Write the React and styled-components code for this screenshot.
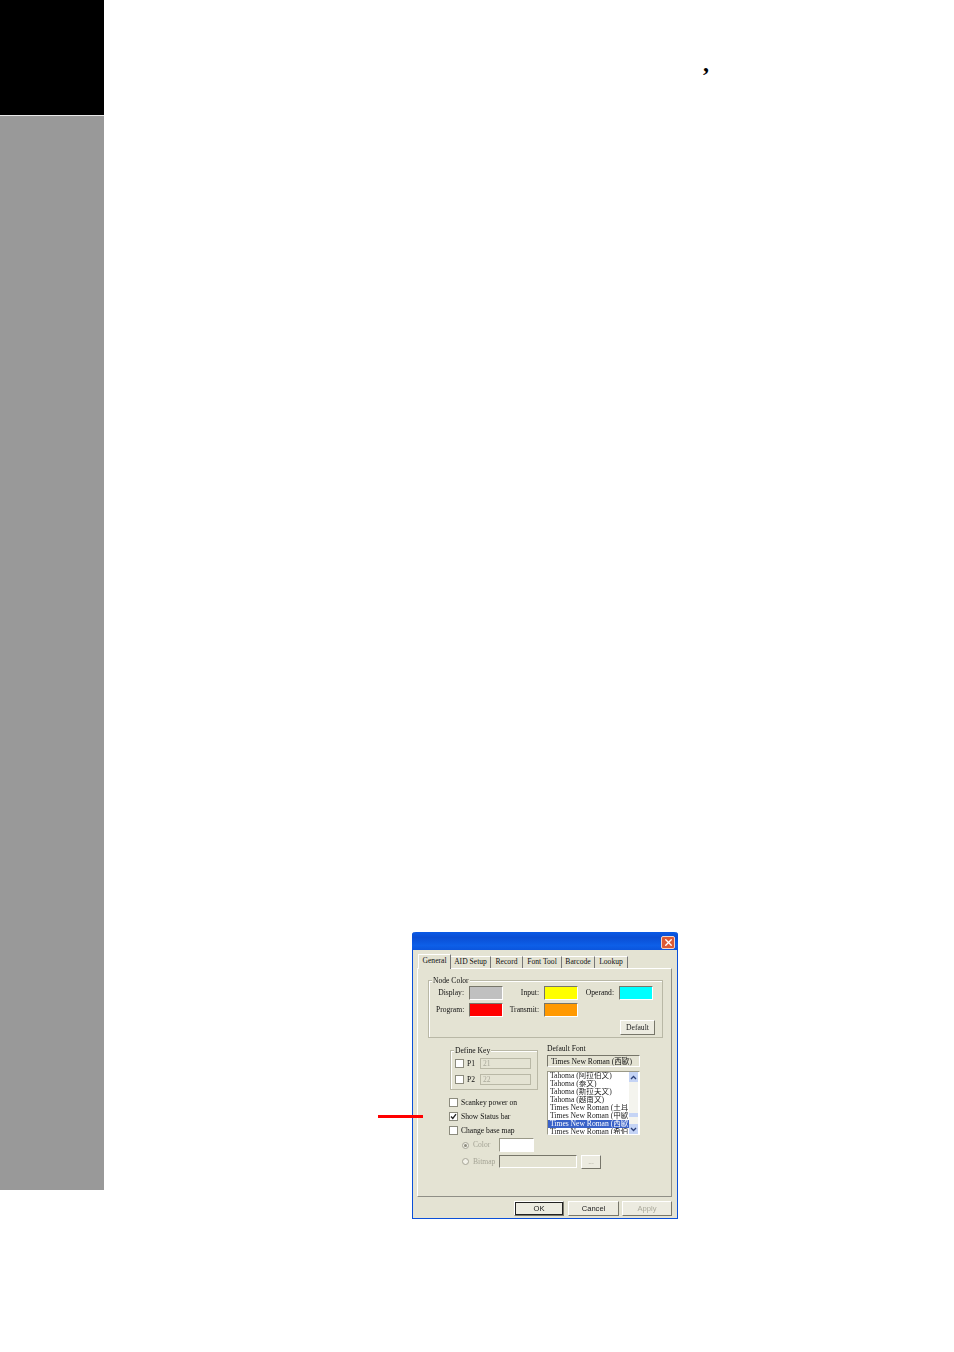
import styled, { createGlobalStyle } from "styled-components";
import { X } from "lucide-react";

const GlobalStyle = createGlobalStyle`
  html, body {
    margin: 0;
    padding: 0;
    background: #fff;
  }
  * {
    box-sizing: border-box;
  }
`;

const Page = styled.div`
  display: flex;
  width: 954px;
  height: 1352px;
  overflow: hidden;
`;

const Sidebar = styled.aside`
  display: flex;
  flex-direction: column;
  flex: none;
  width: 104px;
  height: 1190px;
  background: #999;
`;

const SideHead = styled.div`
  height: 115px;
  background: #000;
`;

const SideRule = styled.div`
  height: 1px;
  background: #e8e8e8;
`;

const Main = styled.main`
  flex: 1;
  display: flex;
  flex-direction: column;
`;

const HeadLine = styled.p`
  margin: 0;
  height: 932px;
  padding: 48px 0 0 599px;
  font: bold 24px/30px "Liberation Serif", serif;
  color: #000;
`;

const Figure = styled.figure`
  position: relative;
  margin: 0 0 0 308px;
  width: 266px;
`;

const Pointer = styled.div`
  position: absolute;
  left: -34px;
  top: 183px;
  width: 45px;
  height: 3px;
  background: #f00;
  z-index: 2;
`;

const Dialog = styled.div`
  display: flex;
  flex-direction: column;
  height: 287px;
  background: #e4e3d3;
  border: 1px solid #0a4fd8;
  border-top: 0;
  border-radius: 3px 3px 0 0;
  font: 7.6px/10px "Liberation Serif", "Noto Sans CJK TC", serif;
  color: #111;
`;

const TitleBar = styled.div`
  display: flex;
  justify-content: flex-end;
  align-items: center;
  flex: none;
  height: 18px;
  margin: 0 -1px;
  padding: 2px 3px 0 0;
  border-radius: 4px 4px 0 0;
  background: linear-gradient(#0a5ae6 0, #0a4ed4 30%, #0d5fe8 75%, #0b55dd 100%);
`;

const CloseBox = styled.div`
  display: flex;
  align-items: center;
  justify-content: center;
  width: 14px;
  height: 13px;
  border: 1px solid #f3d5c8;
  border-radius: 2px;
  background: #dc5a35;
  color: #fff;
`;

const Body = styled.div`
  flex: 1;
  display: flex;
  flex-direction: column;
  padding: 4px 5px 3px 4px;
  min-height: 0;
  filter: blur(0.3px);
`;

const Tabs = styled.div`
  display: flex;
  flex: none;
  height: 14px;
  padding-left: 1px;
  align-items: flex-end;
  position: relative;
  z-index: 1;
`;

const Tab = styled.div`
  flex: none;
  width: ${(p) => p.$w}px;
  height: ${(p) => (p.$active ? 15 : 12)}px;
  padding-top: ${(p) => (p.$active ? 1 : 0)}px;
  margin-bottom: ${(p) => (p.$active ? -1 : 0)}px;
  text-align: center;
  white-space: nowrap;
  background: #e4e3d3;
  border-top: 1px solid #fff;
  border-left: ${(p) => (p.$active ? "1px solid #fff" : "0")};
  border-right: 1px solid #777;
`;

const Panel = styled.div`
  display: flex;
  flex-direction: column;
  flex: none;
  height: 229px;
  padding: 11px 10px 0 10px;
  border: 1px solid #fff;
  border-right-color: #8f8f86;
  border-bottom-color: #8f8f86;
`;

const Group = styled.div`
  position: relative;
  flex: none;
  height: ${(p) => p.$h}px;
  width: ${(p) => p.$w}px;
  border: 1px solid #b9b8a6;
  box-shadow: inset 1px 1px 0 #fff;
`;

const GroupTitle = styled.span`
  position: absolute;
  left: 3px;
  top: -5px;
  padding: 0 1px;
  background: #e4e3d3;
  white-space: nowrap;
`;

const ColorGrid = styled.div`
  display: grid;
  grid-template-columns: 33px 34px 41px 34px 41px 34px;
  grid-auto-rows: 14px;
  row-gap: 3px;
  margin: 5px 0 0 7px;
  align-items: center;
`;

const FieldLabel = styled.span`
  text-align: right;
  padding-right: 5px;
  white-space: nowrap;
`;

const Swatch = styled.div`
  height: 14px;
  background: ${(p) => p.$color};
  border: 1px solid;
  border-color: #77766a #fff #fff #77766a;
`;

const GroupFooter = styled.div`
  display: flex;
  justify-content: flex-end;
  margin: 3px 7px 0 0;
`;

const Button = styled.div`
  display: flex;
  align-items: center;
  justify-content: center;
  flex: none;
  width: ${(p) => p.$w}px;
  height: ${(p) => p.$h || 15}px;
  margin-left: ${(p) => p.$ml || 0}px;
  color: ${(p) => (p.$disabled ? "#aaa99b" : "#222")};
  font-family: ${(p) => (p.$sans ? '"Liberation Sans", sans-serif' : "inherit")};
  background: #ecebe0;
  border: 1px solid;
  border-color: #fff #77766a #77766a #fff;
  box-shadow: ${(p) => (p.$default ? "0 0 0 1px #222 inset" : "none")};
`;

const Columns = styled.div`
  display: flex;
  flex: none;
  margin: 6px 0 0 22px;
`;

const LeftCol = styled.div`
  display: flex;
  flex-direction: column;
  width: 97px;
  padding-top: 6px;
`;

const RightCol = styled.div`
  display: flex;
  flex-direction: column;
  width: 93px;
`;

const KeyRow = styled.div`
  display: flex;
  align-items: center;
  height: 11px;
  margin: ${(p) => p.$top}px 0 0 4px;
`;

const Box = styled.span`
  display: flex;
  align-items: center;
  justify-content: center;
  flex: none;
  width: 9px;
  height: 9px;
  background: #fff;
  border: 1px solid #8c8b7d;
`;

const KeyName = styled.span`
  flex: none;
  width: 16px;
  padding-left: 3px;
`;

const KeyInput = styled.span`
  flex: none;
  width: 51px;
  height: 11px;
  padding-left: 2px;
  line-height: 10px;
  color: #aaa99b;
  background: #e4e3d3;
  border: 1px solid #b9b8a6;
`;

const CheckList = styled.div`
  display: flex;
  flex-direction: column;
  gap: 5px;
  margin-top: 8px;
`;

const CheckRow = styled.label`
  display: flex;
  align-items: center;
  gap: 3px;
  height: 9px;
  margin-left: -1px;
  white-space: nowrap;
`;

const FontLabel = styled.div`
  height: 11px;
  line-height: 9px;
`;

const FontField = styled.div`
  height: 12px;
  padding-left: 3px;
  line-height: 11px;
  white-space: nowrap;
  overflow: hidden;
  background: #e4e3d3;
  border: 1px solid;
  border-color: #77766a #fff #fff #77766a;
`;

const FontList = styled.div`
  display: flex;
  height: 64px;
  margin-top: 4px;
  padding-right: 1px;
  background: #fff;
  border: 1px solid;
  border-color: #9a9988 #fff #fff #9a9988;
  overflow: hidden;
`;

const Items = styled.div`
  flex: 1;
  min-width: 0;
  overflow: hidden;
`;

const Item = styled.div`
  height: 8px;
  padding-left: 2px;
  line-height: 8px;
  white-space: nowrap;
  overflow: hidden;
  color: ${(p) => (p.$selected ? "#fff" : "#222")};
  background: ${(p) => (p.$selected ? "#3a62c8" : "transparent")};
`;

const ScrollTrack = styled.div`
  display: flex;
  flex-direction: column;
  flex: none;
  width: 9px;
  background: #f4f4ee;
`;

const ScrollArrow = styled.div`
  display: flex;
  align-items: center;
  justify-content: center;
  flex: none;
  height: 10px;
  background: #c5d4f5;
  color: #2a3f78;
`;

const ScrollSpace = styled.div`
  flex: 1;
  display: flex;
  flex-direction: column;
  justify-content: flex-end;
  padding-bottom: 7px;
`;

const ScrollThumb = styled.div`
  height: 4px;
  background: #c5d4f5;
`;

const RadioRow = styled.div`
  display: flex;
  align-items: center;
  height: ${(p) => p.$h}px;
  margin: ${(p) => p.$top}px 0 0 34px;
  color: #a5a496;
`;

const Radio = styled.span`
  display: flex;
  align-items: center;
  justify-content: center;
  flex: none;
  width: 7px;
  height: 7px;
  border: 1px solid #a5a496;
  border-radius: 50%;
  background: #f2f1e8;
`;

const RadioDot = styled.span`
  width: 3px;
  height: 3px;
  border-radius: 50%;
  background: #8c8b7d;
`;

const RadioText = styled.span`
  flex: none;
  width: 30px;
  padding-left: 4px;
`;

const ColorInput = styled.div`
  width: 35px;
  height: 14px;
  background: #fff;
  border: 1px solid;
  border-color: #9a9988 #fff #fff #9a9988;
`;

const BitmapInput = styled.div`
  width: 78px;
  height: 13px;
  background: #e4e3d3;
  border: 1px solid;
  border-color: #77766a #fff #fff #77766a;
`;

const Footer = styled.div`
  display: flex;
  justify-content: flex-end;
  flex: none;
  margin-top: 4px;
`;

const tabs = [
  ["General", 33, true],
  ["AID Setup", 40],
  ["Record", 32],
  ["Font Tool", 39],
  ["Barcode", 33],
  ["Lookup", 33],
];

const fonts = [
  "Tahoma (阿拉伯文)",
  "Tahoma (泰文)",
  "Tahoma (斯拉夫文)",
  "Tahoma (越南文)",
  "Times New Roman (土耳",
  "Times New Roman (中歐",
  "Times New Roman (西歐",
  "Times New Roman (希伯",
];

const Check = () => (
  <svg width="7" height="7" viewBox="0 0 7 7">
    <path d="M1 3.5 L2.8 5.5 L6 1.2" fill="none" stroke="#222" strokeWidth="1.3" />
  </svg>
);

const Chevron = ({ down }) => (
  <svg width="7" height="5" viewBox="0 0 7 5">
    <path d={down ? "M1 1 L3.5 3.5 L6 1" : "M1 4 L3.5 1.5 L6 4"} fill="none" stroke="currentColor" strokeWidth="1.3" />
  </svg>
);

export default function App() {
  return (
    <Page>
      <GlobalStyle />
      <Sidebar>
        <SideHead />
        <SideRule />
      </Sidebar>
      <Main>
        <HeadLine>,</HeadLine>
        <Figure>
          <Pointer />
          <Dialog>
            <TitleBar>
              <CloseBox>
                <X size={11} strokeWidth={3} />
              </CloseBox>
            </TitleBar>
            <Body>
              <Tabs>
                {tabs.map(([name, w, active]) => (
                  <Tab key={name} $w={w} $active={active}>
                    {name}
                  </Tab>
                ))}
              </Tabs>
              <Panel>
                <Group $w={235} $h={58}>
                  <GroupTitle>Node Color</GroupTitle>
                  <ColorGrid>
                    <FieldLabel>Display:</FieldLabel>
                    <Swatch $color="#c0c0c0" />
                    <FieldLabel>Input:</FieldLabel>
                    <Swatch $color="#ffff00" />
                    <FieldLabel>Operand:</FieldLabel>
                    <Swatch $color="#00ffff" />
                    <FieldLabel>Program:</FieldLabel>
                    <Swatch $color="#ff0000" />
                    <FieldLabel>Transmit:</FieldLabel>
                    <Swatch $color="#ff9900" />
                  </ColorGrid>
                  <GroupFooter>
                    <Button $w={35}>Default</Button>
                  </GroupFooter>
                </Group>
                <Columns>
                  <LeftCol>
                    <Group $w={88} $h={40}>
                      <GroupTitle>Define Key</GroupTitle>
                      <KeyRow $top={7}>
                        <Box />
                        <KeyName>P1</KeyName>
                        <KeyInput>21</KeyInput>
                      </KeyRow>
                      <KeyRow $top={5}>
                        <Box />
                        <KeyName>P2</KeyName>
                        <KeyInput>22</KeyInput>
                      </KeyRow>
                    </Group>
                    <CheckList>
                      <CheckRow>
                        <Box />
                        Scankey power on
                      </CheckRow>
                      <CheckRow>
                        <Box>
                          <Check />
                        </Box>
                        Show Status bar
                      </CheckRow>
                      <CheckRow>
                        <Box />
                        Change base map
                      </CheckRow>
                    </CheckList>
                  </LeftCol>
                  <RightCol>
                    <FontLabel>Default Font</FontLabel>
                    <FontField>Times New Roman (西歐)</FontField>
                    <FontList>
                      <Items>
                        {fonts.map((f) => (
                          <Item key={f} $selected={f.includes("西歐")}>
                            {f}
                          </Item>
                        ))}
                      </Items>
                      <ScrollTrack>
                        <ScrollArrow>
                          <Chevron />
                        </ScrollArrow>
                        <ScrollSpace>
                          <ScrollThumb />
                        </ScrollSpace>
                        <ScrollArrow>
                          <Chevron down />
                        </ScrollArrow>
                      </ScrollTrack>
                    </FontList>
                  </RightCol>
                </Columns>
                <RadioRow $h={14} $top={3}>
                  <Radio>
                    <RadioDot />
                  </Radio>
                  <RadioText>Color</RadioText>
                  <ColorInput />
                </RadioRow>
                <RadioRow $h={13} $top={3}>
                  <Radio />
                  <RadioText>Bitmap</RadioText>
                  <BitmapInput />
                  <Button $w={20} $h={14} $ml={4} $disabled>
                    ...
                  </Button>
                </RadioRow>
              </Panel>
              <Footer>
                <Button $w={50} $default $sans>
                  OK
                </Button>
                <Button $w={51} $ml={4} $sans>
                  Cancel
                </Button>
                <Button $w={50} $ml={3} $disabled $sans>
                  Apply
                </Button>
              </Footer>
            </Body>
          </Dialog>
        </Figure>
      </Main>
    </Page>
  );
}
